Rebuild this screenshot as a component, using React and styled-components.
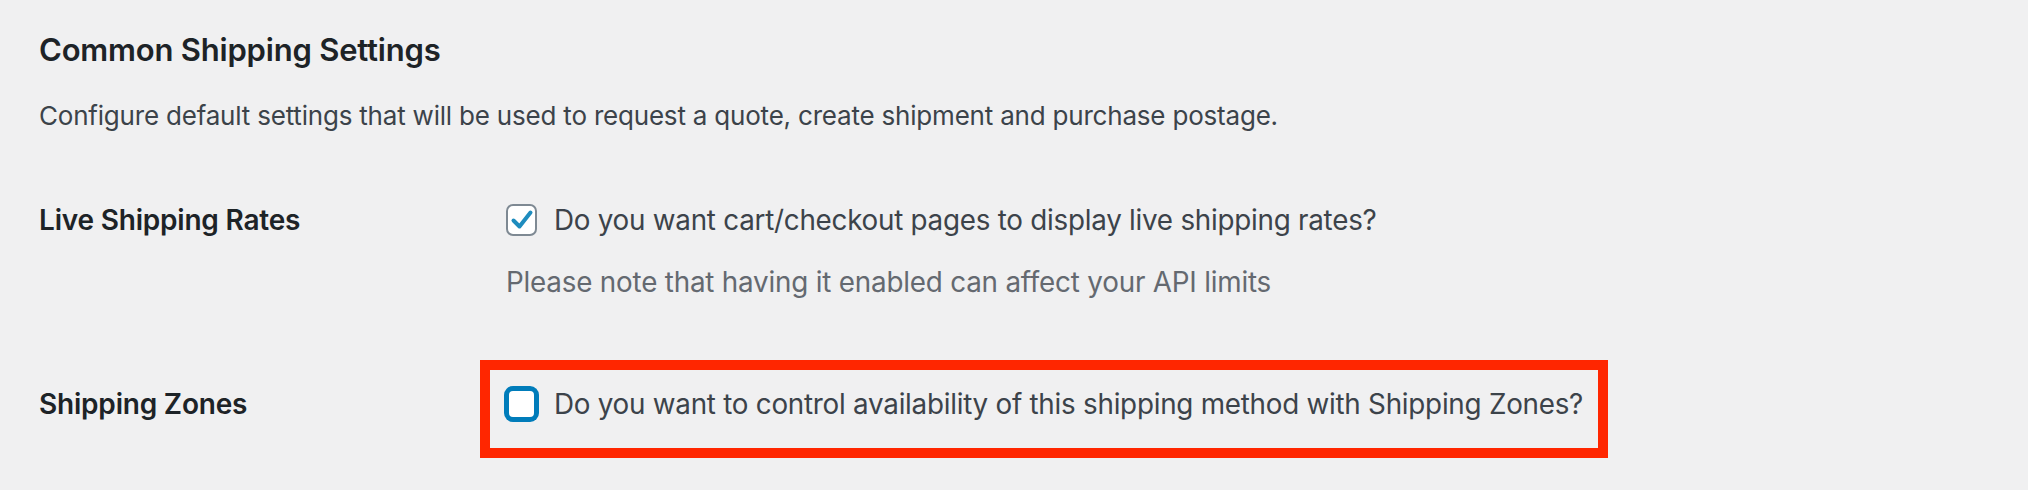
import React from "react";
import styled, { createGlobalStyle } from "styled-components";

const GlobalStyle = createGlobalStyle`
  html, body {
    margin: 0;
    padding: 0;
    background: #f0f0f1;
  }
  body {
    font-family: Inter, "Liberation Sans", sans-serif;
    -webkit-font-smoothing: antialiased;
  }
`;

const Page = styled.div`
  width: 2028px;
  height: 490px;
  box-sizing: border-box;
  padding: 30px 0 0 39px;
  background: #f0f0f1;
  overflow: hidden;
`;

const Heading = styled.h2`
  margin: 0;
  font-size: 31px;
  line-height: 40px;
  font-weight: 600;
  color: #1d2327;
  letter-spacing: -0.2px;
`;

const Intro = styled.p`
  margin: 28px 0 0;
  font-size: 26px;
  line-height: 36px;
  color: #3c434a;
  letter-spacing: -0.2px;
`;

const FormTable = styled.div`
  display: grid;
  grid-template-columns: 467px 1fr;
  align-items: start;
`;

const Label = styled.div`
  grid-column: 1;
  margin-top: ${(p) => p.$offset || 0}px;
  font-size: 28px;
  line-height: 40px;
  font-weight: 600;
  color: #1d2327;
  letter-spacing: -0.2px;
`;

const Field = styled.div`
  grid-column: 2;
  margin-top: ${(p) => p.$offset || 0}px;
`;

const CheckLine = styled.label`
  display: flex;
  align-items: center;
  gap: 17px;
  font-size: 27.8px;
  line-height: 40px;
  color: #3c434a;
  letter-spacing: -0.25px;
  white-space: nowrap;
`;

const Box = styled.span`
  flex: none;
  box-sizing: border-box;
  width: 31px;
  height: 32px;
  display: flex;
  align-items: center;
  justify-content: center;
  background: #fff;
  border-radius: 7px;
  border: ${(p) => (p.$focused ? "3px solid #007cba" : "2px solid #7e8993")};
  box-shadow: ${(p) => (p.$focused ? "0 0 0 2px #007cba" : "none")};
`;

const Note = styled.p`
  margin: 24px 0 0;
  font-size: 27.8px;
  line-height: 36px;
  color: #646970;
  letter-spacing: -0.2px;
`;

const Highlight = styled.div`
  box-sizing: border-box;
  width: 1128px;
  margin-left: -26px;
  border: 10px solid #ff2600;
  padding: 14px 0 24px 16px;
`;

const Check = () => (
  <svg width="24" height="24" viewBox="0 0 24 24">
    <path
      d="M3.5 12.5 L9.5 18.5 L20.5 4.5"
      fill="none"
      stroke="#1e8cbe"
      strokeWidth="4"
      strokeLinecap="round"
      strokeLinejoin="round"
    />
  </svg>
);

const Checkbox = ({ checked, focused }) => (
  <Box $focused={focused}>{checked && <Check />}</Box>
);

export default function App() {
  return (
    <>
      <GlobalStyle />
      <Page>
        <Heading>Common Shipping Settings</Heading>
        <Intro>
          Configure default settings that will be used to request a quote,
          create shipment and purchase postage.
        </Intro>
        <FormTable>
          <Label $offset={66}>Live Shipping Rates</Label>
          <Field $offset={66}>
            <CheckLine>
              <Checkbox checked />
              Do you want cart/checkout pages to display live shipping rates?
            </CheckLine>
            <Note>Please note that having it enabled can affect your API limits</Note>
          </Field>
          <Label $offset={84}>Shipping Zones</Label>
          <Field $offset={60}>
            <Highlight>
              <CheckLine>
                <Checkbox focused />
                Do you want to control availability of this shipping method with
                Shipping Zones?
              </CheckLine>
            </Highlight>
          </Field>
        </FormTable>
      </Page>
    </>
  );
}
